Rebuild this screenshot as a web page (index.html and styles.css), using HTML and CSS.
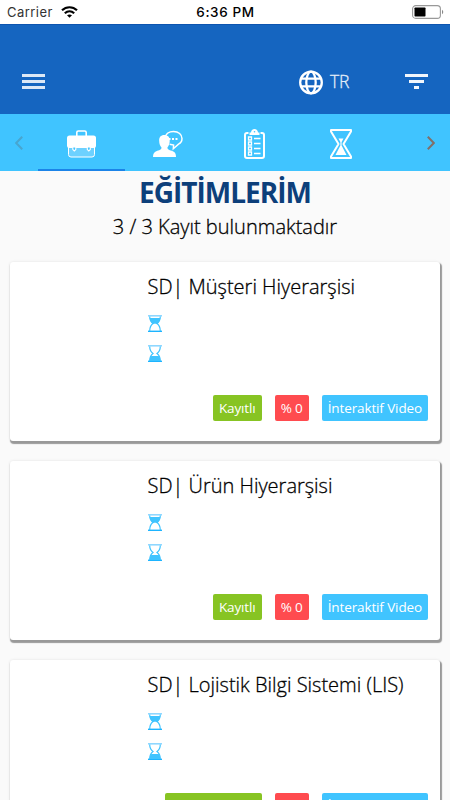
FILE: index.html
```html
<!DOCTYPE html>
<html lang="tr">
<head>
    <meta charset="UTF-8">
    <meta name="viewport" content="width=device-width, initial-scale=1.0">
    <title>Eğitimlerim</title>
    <link rel="stylesheet" href="styles.css">
</head>
<body>
    <!-- shared icons -->
    <svg class="sprite" width="0" height="0">
        <symbol id="glass-full" viewBox="0 0 14 17">
            <path d="M0 .8h14" stroke="#8fd7ff" stroke-width="1.6"/>
            <path d="M0 16.3h14" stroke="#1db4ff" stroke-width="1.4"/>
            <path d="M1.7 1.5C1.7 5 3 7 5 8.5 3 10 1.7 12.5 1.7 16M12.3 1.5C12.3 5 11 7 9 8.5 11 10 12.3 12.5 12.3 16" fill="none" stroke="#40c4ff" stroke-width="1.2"/>
            <path d="M1.7 3h10.6C12 6 10.5 8 9 9.2c-1.2-.5-2.8-.5-4 0C3.5 8 2 6 1.7 3z" fill="#40c4ff"/>
        </symbol>
        <symbol id="glass-empty" viewBox="0 0 14 17">
            <path d="M0 .8h14" stroke="#8fd7ff" stroke-width="1.6"/>
            <path d="M0 16.3h14" stroke="#1db4ff" stroke-width="1.4"/>
            <path d="M1.7 1.5C1.7 5 3 7 5 8.5 3 10 1.7 12.5 1.7 16M12.3 1.5C12.3 5 11 7 9 8.5 11 10 12.3 12.5 12.3 16" fill="none" stroke="#40c4ff" stroke-width="1.2"/>
            <path d="M1.5 16c0-2 .6-3.7 1.9-5h7.2c1.3 1.3 1.9 3 1.9 5z" fill="#40c4ff"/>
        </symbol>
    </svg>

    <div class="status-bar">
        <div class="carrier">
            <span>Carrier</span>
            <svg width="17" height="12" viewBox="0 0 17 12" fill="none" stroke="#000" stroke-width="2.2">
                <path d="M1 4.3C5.3.2 11.7.2 16 4.3"/>
                <path d="M3.8 7.2c2.8-2.5 6.6-2.5 9.4 0"/>
                <path d="M8.5 11.8L6 9.3c1.5-1.2 3.5-1.2 5 0z" fill="#000" stroke="none"/>
            </svg>
        </div>
        <div class="clock">6:36 PM</div>
        <svg class="battery" width="32" height="14" viewBox="0 0 32 14">
            <rect x=".6" y=".6" width="27.8" height="12.8" rx="3.2" fill="#fff" stroke="#999" stroke-width="1.1"/>
            <rect x="2.5" y="2.5" width="11" height="9" rx=".7"/>
            <path d="M30 4.8c1.7.8 1.7 3.6 0 4.4z" fill="#888"/>
        </svg>
    </div>

    <header class="toolbar">
        <svg width="23" height="16" viewBox="0 0 23 16" fill="#dce8f6">
            <path d="M0 0h23v3H0zM0 6h23v3H0zM0 12h23v3H0z"/>
        </svg>
        <div class="language">
            <svg width="24" height="25" viewBox="0 0 24 25" fill="none" stroke="#fff" stroke-width="2.3">
                <circle cx="12" cy="12.5" r="10.8"/>
                <ellipse cx="12" cy="12.5" rx="4.7" ry="10.8"/>
                <path d="M2 8.7h20M2 16.3h20"/>
            </svg>
            <span>TR</span>
        </div>
        <svg width="23" height="16" viewBox="0 0 23 16" fill="#f1f6fc">
            <path d="M0 0h23v3H0zM4 6h15v3H4zM9 12h5v3H9z"/>
        </svg>
    </header>

    <nav class="tabs">
        <svg class="arrow" width="8" height="14" viewBox="0 0 8 14"><path d="M7.2.8L1.2 7l6 6.2" fill="none" stroke="#48a5cf" stroke-width="2"/></svg>
        <div class="tab active">
            <svg width="29" height="28" viewBox="0 0 29 28" fill="none" stroke="#fff">
                <path d="M1.5 16v8.5a2.5 2.5 0 0 0 2.5 2.5h21a2.5 2.5 0 0 0 2.5-2.5V16" fill="#6dd1ff"/>
                <path d="M9.8 6V2.5Q9.8 1 11.3 1h6.4q1.5 0 1.5 1.5V6" stroke-width="1.6"/>
                <path d="M2.5 5.5h24Q29 5.5 29 8v7.5q0 2.5-2.5 2.5h-24Q0 18 0 15.5V8q0-2.5 2.5-2.5z" fill="#fff" stroke="none"/>
                <path d="M5.8 17h3v2.5l-1.5 1.5-1.5-1.5zM20.3 17h3v2.5l-1.5 1.5-1.5-1.5z" fill="#40c4ff" stroke-width="1.1"/>
            </svg>
        </div>
        <div class="tab">
            <svg width="30" height="28" viewBox="0 0 30 28">
                <path d="M12 7.5C13 3.5 16.5 1.5 20.5 1.5c5 0 8.5 3 8.5 7 0 2.5-1.2 4.5-3.5 5.7l-5.2 4.5.3-3.7-4-.8" fill="none" stroke="#fff" stroke-width="1.5"/>
                <path d="M15.5 9h2M19 9h2M22.5 9h2" stroke="#fff" stroke-width="1.8"/>
                <path d="M11.3 5c3.7 0 5.7 2.3 5.4 6 0 3-1 5-2.3 6.5 0 2 1.5 2.3 4.3 3.3 3.3 1 4.3 2.7 4.3 6.2H0c0-3.5 1.2-5.2 4.3-6.2 3-1 4.2-1.3 4.2-3.3C7.1 16 6.2 14 6.2 11c-.3-3.7 1.6-6 5.1-6z" fill="#fff"/>
            </svg>
        </div>
        <div class="tab">
            <svg width="21" height="30" viewBox="0 0 21 30" fill="none" stroke="#fff">
                <path d="M4.5 4H3Q1 4 1 6v21q0 2 2 2h15q2 0 2-2V6q0-2-2-2h-1.5" stroke-width="2"/>
                <path d="M5.5 6V3.5H7C7.2 1.3 8.5 0 10.5 0S13.8 1.3 14 3.5h1.5V6z" fill="#fff" stroke="none"/>
                <circle cx="10.5" cy="2.7" r=".8" fill="#40c4ff" stroke="none"/>
                <path d="M4.5 8h3v3h-3zM4.5 13h3v3h-3zM4.5 18h3v3h-3zM4.5 23h3v3h-3z" stroke-width="1.3"/>
                <path d="M10 9.5h6.5M10 14.5h6.5M10 19.5h6.5M10 24.5h6.5" stroke-width="1.5"/>
            </svg>
        </div>
        <div class="tab">
            <svg width="22" height="30" viewBox="0 0 22 30" fill="none" stroke="#fff">
                <path d="M1 1h20v1.5L13.5 15 21 27.5V29H1v-1.5L8.5 15 1 2.5z" stroke-width="2" stroke-linejoin="round"/>
                <path d="M8.5 9.5h5L11.6 13v3.500L16.500 26h-11l4.900-9.500V13z" fill="#fff" stroke="none"/>
            </svg>
        </div>
        <svg class="arrow" width="8" height="14" viewBox="0 0 8 14"><path d="M.8.8L6.8 7l-6 6.2" fill="none" stroke="#806f69" stroke-width="2"/></svg>
    </nav>

    <main>
        <h1>EĞİTİMLERİM</h1>
        <p class="count">3 / 3 Kayıt bulunmaktadır</p>

        <div class="card">
            <h2>SD| Müşteri Hiyerarşisi</h2>
            <svg class="time"><use href="#glass-full"/></svg>
            <svg class="time"><use href="#glass-empty"/></svg>
            <div class="badges">
                <span class="badge green">Kayıtlı</span>
                <span class="badge red">% 0</span>
                <span class="badge blue">İnteraktif Video</span>
            </div>
        </div>

        <div class="card">
            <h2>SD| Ürün Hiyerarşisi</h2>
            <svg class="time"><use href="#glass-full"/></svg>
            <svg class="time"><use href="#glass-empty"/></svg>
            <div class="badges">
                <span class="badge green">Kayıtlı</span>
                <span class="badge red">% 0</span>
                <span class="badge blue">İnteraktif Video</span>
            </div>
        </div>

        <div class="card">
            <h2>SD| Lojistik Bilgi Sistemi (LIS)</h2>
            <svg class="time"><use href="#glass-full"/></svg>
            <svg class="time"><use href="#glass-empty"/></svg>
            <div class="badges">
                <span class="badge green wide"></span>
                <span class="badge red">% 0</span>
                <span class="badge blue">İnteraktif Video</span>
            </div>
        </div>
    </main>
</body>
</html>
```
FILE: styles.css
```css
* {
    margin: 0;
    padding: 0;
    box-sizing: border-box;
}

body {
    height: 800px;
    overflow: hidden;
    background: #fafafa;
    font-family: 'Open Sans', sans-serif;
    color: #000;
}

svg {
    display: block;
    flex-shrink: 0;
}

.sprite {
    position: absolute;
}

.status-bar {
    display: grid;
    grid-template-columns: 1fr auto 1fr;
    align-items: center;
    height: 24px;
    padding: 0 6px 0 7px;
    background: #fff;
    font-family: Inter, sans-serif;
    font-size: 13px;
}

.carrier {
    display: flex;
    align-items: center;
    gap: 8px;
    color: #333;
    letter-spacing: 0.45px;
}

.clock {
    font-weight: 500;
    color: #000;
    font-size: 13.5px;
    letter-spacing: 0.6px;
}

.battery {
    justify-self: end;
}

.toolbar {
    display: flex;
    align-items: flex-start;
    height: 90px;
    padding: 49px 22px 0;
    background: #1565c0;
    border-top: 1px solid #0d55b0;
}

.language {
    display: flex;
    align-items: center;
    gap: 7px;
    height: 25px;
    margin: -4px 56px 0 auto;
    color: #e3edf8;
    font-size: 17.5px;
    font-weight: 300;
    letter-spacing: -0.3px;
    -webkit-text-stroke: 0.3px;
}

.language span {
    margin-top: -4px;
}

.tabs {
    display: flex;
    align-items: center;
    height: 57px;
    padding: 0 15px;
    background: #40c4ff;
}

.tab {
    display: flex;
    align-items: center;
    justify-content: center;
    width: 86.5px;
    height: 57px;
    padding-top: 4px;
    border-bottom: 2px solid transparent;
}

.tab.active {
    border-bottom-color: #1b83e8;
}

.arrow:first-child {
    margin-right: 15px;
}

.arrow:last-child {
    margin-left: auto;
}

h1 {
    height: 42px;
    line-height: 42px;
    text-align: center;
    font-size: 28px;
    font-weight: 700;
    letter-spacing: -1px;
    color: #0d3f7a;
}

.count {
    height: 28px;
    margin-bottom: 21px;
    line-height: 28px;
    text-align: center;
    font-size: 20px;
    font-weight: 300;
    -webkit-text-stroke: 0.3px;
}

.card {
    height: 179px;
    margin: 0 10px 20px;
    padding: 11px 12px 0 137.5px;
    background: #fff;
    border-radius: 3px;
    box-shadow: 1px 2px 1px 1px #999, 0 0 3px rgba(0, 0, 0, 0.1);
}

h2 {
    height: 28px;
    margin-bottom: 14px;
    line-height: 28px;
    font-size: 20px;
    font-weight: 300;
    white-space: nowrap;
    -webkit-text-stroke: 0.3px;
}

.time {
    width: 14px;
    height: 17px;
    margin-bottom: 13px;
}

.badges {
    display: flex;
    justify-content: flex-end;
    gap: 13px;
    margin-top: 33px;
}

.badge {
    height: 26px;
    padding: 0 6px;
    border-radius: 2px;
    line-height: 26px;
    font-size: 13.5px;
    letter-spacing: -0.12px;
    color: #fff;
    white-space: nowrap;
}

.green {
    background: #87c423;
}

.red {
    background: #ff4b4f;
}

.blue {
    background: #40c4ff;
}

.wide {
    width: 97px;
}
```
